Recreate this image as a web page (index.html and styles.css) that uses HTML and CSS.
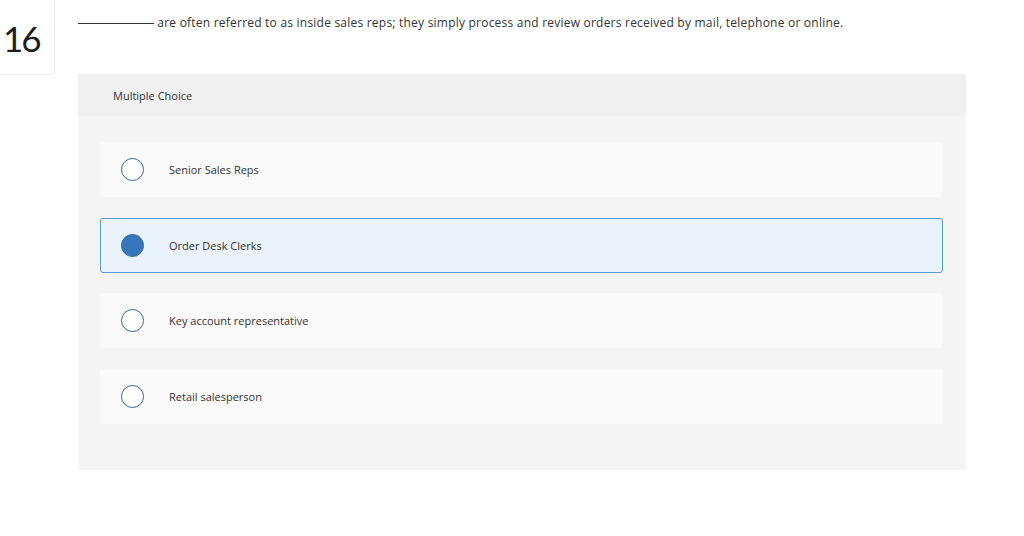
FILE: index.html
```html
<!DOCTYPE html>
<html>
<head>
<meta charset="utf-8">
<link rel="stylesheet" href="styles.css">
</head>
<body>
<div class="page">
  <div class="qnum">16</div>
  <div class="main">
    <p class="question"><span class="blank"></span> are often referred to as inside sales reps; they simply process and review orders received by mail, telephone or online.</p>
    <div class="panel">
      <div class="panel-head">Multiple Choice</div>
      <div class="panel-body">
        <div class="option"><span class="radio"></span><span class="label">Senior Sales Reps</span></div>
        <div class="option selected"><span class="radio"></span><span class="label">Order Desk Clerks</span></div>
        <div class="option"><span class="radio"></span><span class="label">Key account representative</span></div>
        <div class="option"><span class="radio"></span><span class="label">Retail salesperson</span></div>
      </div>
    </div>
  </div>
</div>
</body>
</html>
```
FILE: styles.css
```css
html, body {
  margin: 0;
  padding: 0;
  background: #fff;
  font-family: "Open Sans", Lato, "Liberation Sans", sans-serif;
  color: #222;
}
.page {
  display: flex;
  align-items: flex-start;
}
.qnum {
  box-sizing: border-box;
  width: 65px;
  height: 86px;
  margin: -11px 0 0 -10px;
  border: 1px solid #ebebeb;
  border-radius: 4px;
  display: flex;
  align-items: center;
  padding: 12px 0 0 12px;
  font-family: Lato, "Open Sans", sans-serif;
  font-size: 35px;
  color: #1d1d1d;
  letter-spacing: -2px;
}
.main {
  margin-left: 23px;
  width: 888px;
}
.question {
  margin: 14px 0 0 0;
  font-size: 12px;
  letter-spacing: 0.22px;
  line-height: 18px;
  color: #333;
  height: 60px;
}
.blank {
  display: inline-block;
  width: 76px;
  border-bottom: 1px solid #333;
  vertical-align: 3px;
}
.panel {
  background: #f5f5f5;
}
.panel-head {
  height: 42px;
  background: #f0f0f0;
  display: flex;
  align-items: center;
  padding-left: 35px;
  font-size: 11px;
  color: #333;
}
.panel-body {
  padding: 26px 23px 46px 22px;
  display: flex;
  flex-direction: column;
  gap: 20.5px;
}
.option {
  box-sizing: border-box;
  height: 55px;
  background: #fafafa;
  border: 1px solid #fafafa;
  border-radius: 3px;
  display: flex;
  align-items: center;
  padding-left: 20px;
}
.option.selected {
  background: #eaf2fb;
  border-color: #5b9bd5;
}
.radio {
  box-sizing: border-box;
  width: 23px;
  height: 23px;
  border-radius: 50%;
  border: 1.5px solid #2f67a3;
  background: #fff;
  flex: none;
}
.selected .radio {
  background: #3676bb;
  border-color: #2f6aa8;
}
.label {
  margin-left: 25px;
  font-size: 11px;
  color: #333;
}
```
